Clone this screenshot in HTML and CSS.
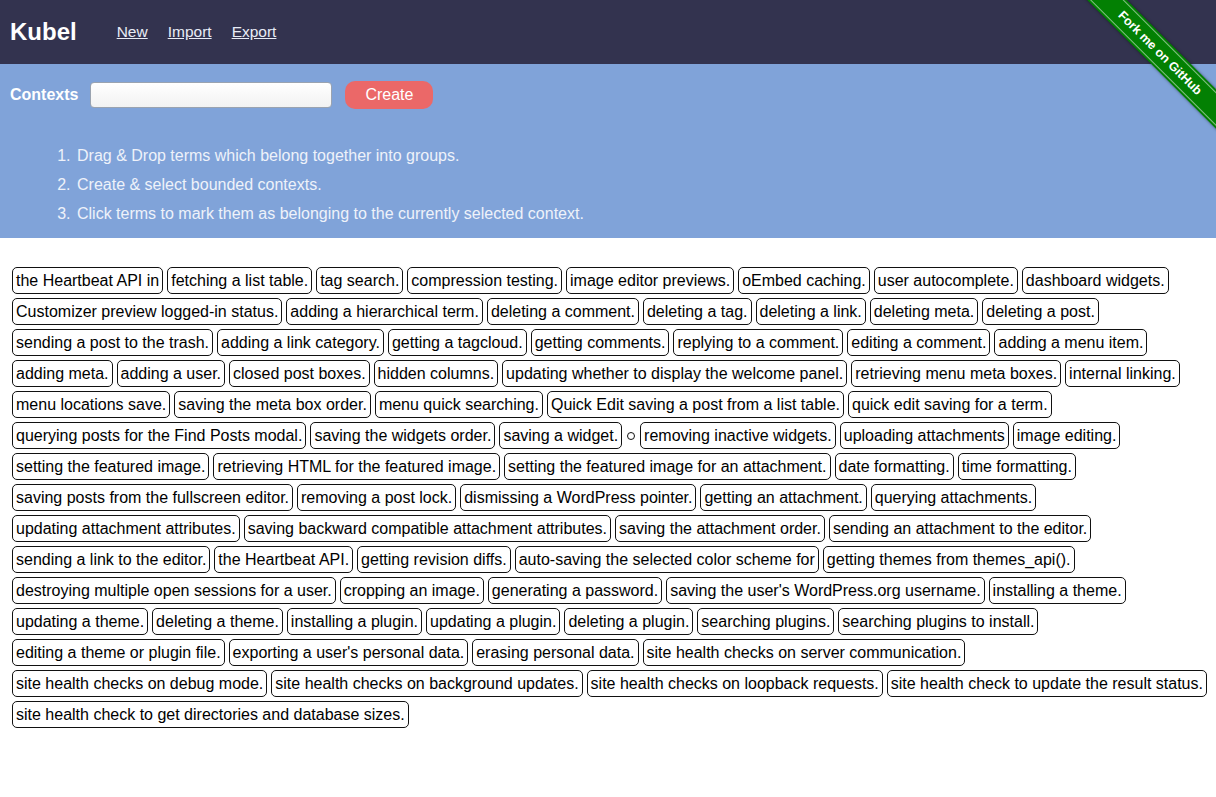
FILE: index.html
```html
<!DOCTYPE html>
<html>
<head>
<meta charset="utf-8">
<title>Kubel</title>
<link rel="stylesheet" href="styles.css">
</head>
<body>
<header class="topbar">
  <span class="logo">Kubel</span>
  <nav class="nav">
    <a href="#">New</a>
    <a href="#">Import</a>
    <a href="#">Export</a>
  </nav>
</header>
<a class="ribbon" href="#">Fork me on GitHub</a>
<section class="panel">
  <div class="contexts">
    <label class="contexts-label">Contexts</label>
    <input class="contexts-input" type="text">
    <button class="create-btn">Create</button>
  </div>
  <ol class="steps">
    <li>Drag &amp; Drop terms which belong together into groups.</li>
    <li>Create &amp; select bounded contexts.</li>
    <li>Click terms to mark them as belonging to the currently selected context.</li>
  </ol>
</section>
<main class="terms">
  <div class="row">
    <span class="term">the Heartbeat API in</span><span class="term">fetching a list table.</span><span class="term">tag search.</span><span class="term">compression testing.</span><span class="term">image editor previews.</span><span class="term">oEmbed caching.</span><span class="term">user autocomplete.</span><span class="term">dashboard widgets.</span>
  </div>
  <div class="row">
    <span class="term">Customizer preview logged-in status.</span><span class="term">adding a hierarchical term.</span><span class="term">deleting a comment.</span><span class="term">deleting a tag.</span><span class="term">deleting a link.</span><span class="term">deleting meta.</span><span class="term">deleting a post.</span>
  </div>
  <div class="row">
    <span class="term">sending a post to the trash.</span><span class="term">adding a link category.</span><span class="term">getting a tagcloud.</span><span class="term">getting comments.</span><span class="term">replying to a comment.</span><span class="term">editing a comment.</span><span class="term">adding a menu item.</span>
  </div>
  <div class="row">
    <span class="term">adding meta.</span><span class="term">adding a user.</span><span class="term">closed post boxes.</span><span class="term">hidden columns.</span><span class="term">updating whether to display the welcome panel.</span><span class="term">retrieving menu meta boxes.</span><span class="term">internal linking.</span>
  </div>
  <div class="row">
    <span class="term">menu locations save.</span><span class="term">saving the meta box order.</span><span class="term">menu quick searching.</span><span class="term">Quick Edit saving a post from a list table.</span><span class="term">quick edit saving for a term.</span>
  </div>
  <div class="row">
    <span class="term">querying posts for the Find Posts modal.</span><span class="term">saving the widgets order.</span><span class="term">saving a widget.</span><span class="term term-empty"></span><span class="term">removing inactive widgets.</span><span class="term">uploading attachments</span><span class="term">image editing.</span>
  </div>
  <div class="row">
    <span class="term">setting the featured image.</span><span class="term">retrieving HTML for the featured image.</span><span class="term">setting the featured image for an attachment.</span><span class="term">date formatting.</span><span class="term">time formatting.</span>
  </div>
  <div class="row">
    <span class="term">saving posts from the fullscreen editor.</span><span class="term">removing a post lock.</span><span class="term">dismissing a WordPress pointer.</span><span class="term">getting an attachment.</span><span class="term">querying attachments.</span>
  </div>
  <div class="row">
    <span class="term">updating attachment attributes.</span><span class="term">saving backward compatible attachment attributes.</span><span class="term">saving the attachment order.</span><span class="term">sending an attachment to the editor.</span>
  </div>
  <div class="row">
    <span class="term">sending a link to the editor.</span><span class="term">the Heartbeat API.</span><span class="term">getting revision diffs.</span><span class="term">auto-saving the selected color scheme for</span><span class="term">getting themes from themes_api().</span>
  </div>
  <div class="row">
    <span class="term">destroying multiple open sessions for a user.</span><span class="term">cropping an image.</span><span class="term">generating a password.</span><span class="term">saving the user's WordPress.org username.</span><span class="term">installing a theme.</span>
  </div>
  <div class="row">
    <span class="term">updating a theme.</span><span class="term">deleting a theme.</span><span class="term">installing a plugin.</span><span class="term">updating a plugin.</span><span class="term">deleting a plugin.</span><span class="term">searching plugins.</span><span class="term">searching plugins to install.</span>
  </div>
  <div class="row">
    <span class="term">editing a theme or plugin file.</span><span class="term">exporting a user's personal data.</span><span class="term">erasing personal data.</span><span class="term">site health checks on server communication.</span>
  </div>
  <div class="row">
    <span class="term">site health checks on debug mode.</span><span class="term">site health checks on background updates.</span><span class="term">site health checks on loopback requests.</span><span class="term">site health check to update the result status.</span>
  </div>
  <div class="row">
    <span class="term">site health check to get directories and database sizes.</span>
  </div>
</main>
</body>
</html>
```

FILE: styles.css
```css
html, body {
  margin: 0;
  padding: 0;
}
body {
  font-family: "Liberation Sans", Arial, sans-serif;
  font-size: 16px;
  color: #000;
  background: #fff;
  position: relative;
  overflow-x: hidden;
  min-height: 797px;
}

.topbar {
  height: 64px;
  background: #33334f;
  display: flex;
  align-items: center;
  padding-left: 10px;
  box-sizing: border-box;
}
.logo {
  color: #fff;
  font-weight: bold;
  font-size: 24px;
  margin-right: 40px;
}
.nav {
  display: flex;
  gap: 20px;
}
.nav a {
  color: #e8ecf6;
  font-size: 15.5px;
  text-decoration: underline;
}

.ribbon {
  position: absolute;
  top: 39px;
  right: -74px;
  width: 260px;
  height: 28px;
  line-height: 28px;
  background: #038003;
  color: #fff;
  font-weight: bold;
  font-size: 12.5px;
  text-align: center;
  text-decoration: none;
  transform: rotate(45deg);
  box-shadow: 0 0 3px rgba(0, 0, 0, 0.5);
  z-index: 5;
}
.ribbon::before,
.ribbon::after {
  content: "";
  position: absolute;
  left: 0;
  right: 0;
  height: 1px;
  background: rgba(255, 255, 255, 0.5);
}
.ribbon::before {
  top: 2px;
}
.ribbon::after {
  bottom: 2px;
}

.panel {
  background: #80a3d9;
  padding: 16px 10px 9px 10px;
  height: 174px;
  box-sizing: border-box;
}
.contexts {
  display: flex;
  align-items: center;
  height: 29px;
}
.contexts-label {
  color: #fff;
  font-weight: bold;
  font-size: 16px;
  margin-right: 12px;
}
.contexts-input {
  width: 242px;
  height: 26px;
  box-sizing: border-box;
  border: 1px solid #9aa3b0;
  border-radius: 4px;
  background: linear-gradient(#ffffff, #f2f2f2);
  margin: 0 13px 0 0;
  padding: 0 6px;
}
.create-btn {
  height: 28px;
  width: 88px;
  border: none;
  border-radius: 10px;
  background: #eb6868;
  color: #fff;
  font-family: "Liberation Sans", Arial, sans-serif;
  font-size: 16px;
  padding: 0;
}
.steps {
  margin: 32px 0 0 0;
  padding-left: 65px;
  color: #eef2fa;
  font-size: 16px;
  line-height: 29px;
}
.steps li {
  padding-left: 2px;
}

.terms {
  padding: 29px 12px 0 12px;
  display: flex;
  flex-direction: column;
  gap: 4px;
}
.row {
  display: flex;
  align-items: center;
  gap: 4px;
}
.term {
  border: 1px solid #111;
  border-radius: 5px;
  padding: 3px 3px;
  line-height: 19px;
  white-space: nowrap;
  color: #000;
}
.term-empty {
  width: 6px;
  height: 6px;
  padding: 0;
  border-radius: 50%;
  margin: 0 1px;
}
```
